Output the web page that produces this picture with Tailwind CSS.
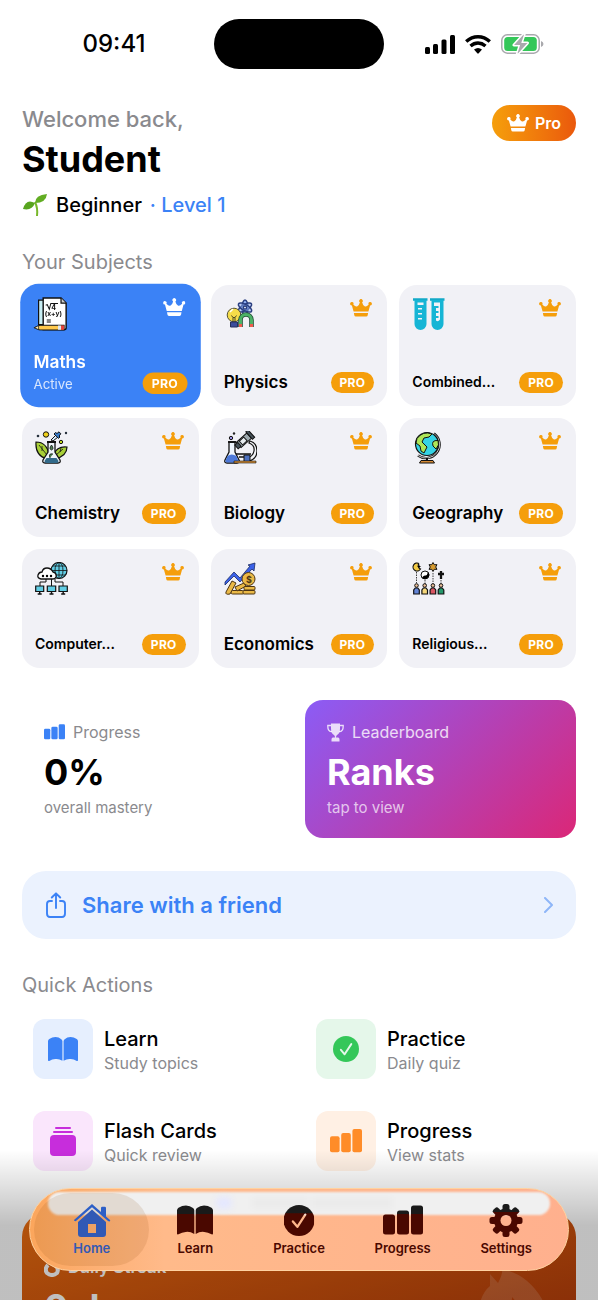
<!DOCTYPE html>
<html lang="en">
<head>
    <meta charset="UTF-8" />
    <meta name="viewport" content="width=device-width, initial-scale=1.0"/>
    <title>Study App - Home</title>
    <script src="https://cdn.jsdelivr.net/npm/@tailwindcss/browser@4"></script>
    <style>
        body { font-family: Inter, 'Liberation Sans', sans-serif; }
    </style>
</head>
<body class="bg-white text-black">
    <!-- Gradients and masks (must not be display:none) -->
    <svg class="absolute size-0" aria-hidden="true">
        <linearGradient id="tone" gradientUnits="userSpaceOnUse" x1="0" y1="8" x2="0" y2="9">
            <stop offset="0" stop-color="#1a1a1a"/><stop offset="1" stop-color="#4a0800"/>
        </linearGradient>
        <mask id="checkMask" maskUnits="userSpaceOnUse" x="0" y="0" width="32" height="32">
            <circle cx="16" cy="16" r="16" fill="#fff"/>
            <path d="m9.700 17 4.600 5.500L22.500 10" fill="none" stroke="#000" stroke-width="2.400" stroke-linecap="round" stroke-linejoin="round"/>
        </mask>
        <mask id="gearMask" maskUnits="userSpaceOnUse" x="0" y="0" width="34" height="34">
            <g fill="#fff" transform="translate(17 17)">
                <g id="teeth"><rect x="-3.500" y="-16.500" width="7" height="33" rx="2.500"/><rect x="-16.500" y="-3.500" width="33" height="7" rx="2.500"/></g>
                <use href="#teeth" transform="rotate(45)"/>
                <circle r="12"/><circle r="5.500" fill="#000"/>
            </g>
        </mask>
    </svg>

    <!-- Shared icons -->
    <svg class="hidden" aria-hidden="true">
        <symbol id="crown" viewBox="0 0 22 18">
            <path fill="currentColor" d="M3.600 12.600 1.900 6.400A1.700 1.700 0 1 1 3.300 5.500Q5.600 8.100 7.400 7.200 9.200 6.300 9.900 3.300A1.800 1.800 0 1 1 12.100 3.300Q12.800 6.300 14.600 7.200 16.400 8.100 18.700 5.500A1.700 1.700 0 1 1 20.100 6.400L18.400 12.600ZM3.900 14H18.100L17.700 16.200Q17.500 17.500 16.200 17.500H5.800Q4.500 17.500 4.300 16.200Z"/>
        </symbol>
        <symbol id="bars" viewBox="0 0 40 30">
            <rect x="0" y="9" width="12" height="20" rx="2.500"/>
            <rect x="14" y="5" width="12" height="24" rx="2.500"/>
            <rect x="28" y="0" width="12" height="29" rx="2.500"/>
        </symbol>
        <symbol id="book" viewBox="0 0 36 30">
            <path d="M0 5Q0 3.500 1.500 2.300 5 0 9 0T16 2.600Q17.300 3.600 17.300 5V28.500Q13 25.700 8.700 26.400 5 26.600 1.500 28.800 0 29.300 0 28ZM36 5Q36 3.500 34.500 2.300 31 0 27 0T20 2.600Q18.700 3.600 18.700 5V28.500Q23 25.700 27.300 26.400 31 26.600 34.500 28.800 36 29.300 36 28Z"/>
        </symbol>
        <symbol id="check" viewBox="0 0 32 32">
            <rect width="32" height="32" mask="url(#checkMask)"/>
        </symbol>
        <symbol id="gear" viewBox="0 0 34 34">
            <rect width="34" height="34" mask="url(#gearMask)"/>
        </symbol>

        <symbol id="maths" viewBox="0 0 33 33">
            <path d="M5 3h6v24H5z" fill="#c8eef4" stroke="#111" stroke-width="1.200"/>
            <path d="M9.500 1H27l5 5v24q0 2-2 2H9.500z" fill="#fff" stroke="#111" stroke-width="1.400"/>
            <path d="M27 1v5h5" fill="#ccc" stroke="#111" stroke-width="1.200"/>
            <path d="m12 8 1.500-.6L15.500 12 17 6.300h7" fill="none" stroke="#111"/>
            <text x="17.500" y="13" font-size="7" font-weight="700" fill="#111">4</text>
            <text x="11" y="19" font-size="6.500" font-weight="700" fill="#111">(x+y)</text>
            <path d="M13 22.500h4M13 24.500h4" stroke="#111"/>
            <path d="m1 30 5-2.300h24v4.600H6z" fill="#ffc94d" stroke="#111"/>
            <path d="m1 30 4-2v4z" fill="#fff0c0" stroke="#111" stroke-width=".7"/>
            <path d="M24 28h3v4h-3z" fill="#dfe8ef"/><path d="M27 28h3v4h-3z" fill="#e8403a"/>
        </symbol>
        <symbol id="physics" viewBox="0 0 33 33">
            <g fill="#8fb0f4" stroke="#2b3f80" stroke-width="1.500">
                <ellipse cx="21" cy="9.500" rx="3" ry="7.500"/>
                <ellipse cx="21" cy="9.500" rx="3" ry="7.500" transform="rotate(60 21 9.500)" fill-opacity=".5"/>
                <ellipse cx="21" cy="9.500" rx="3" ry="7.500" transform="rotate(120 21 9.500)" fill-opacity=".5"/>
                <circle cx="21" cy="9.500" r="1.600" fill="#fff"/>
            </g>
            <circle cx="10" cy="17" r="6.800" fill="#f5dc49" stroke="#555336" stroke-width="1"/>
            <path d="m6 14 3-3" stroke="#fff" stroke-width="1.500"/>
            <path d="M7.500 17.500 9 19.500V24m3.500-6.500L11 19.500V24M9 19.500h2" fill="none" stroke="#4c4824"/>
            <path d="M6.500 24h7v5h-7z" fill="#3c4d9c" stroke="#26305c"/>
            <path d="M16.500 29v-7a5.500 5.500 0 0 1 11 0v7" fill="none" stroke="#244d38" stroke-width="4.600"/>
            <path d="M16.500 26v-4a5.500 5.500 0 0 1 11 0v4" fill="none" stroke="#4cb266" stroke-width="3"/>
            <path d="M15 26h3v3h-3zm11 0h3v3h-3z" fill="#f05b4d"/>
        </symbol>
        <symbol id="tubes" viewBox="0 0 33 33">
            <path d="M1 1.500h14.500M18 1.500h14.500" stroke="#12a9c8" stroke-width="2.600"/>
            <path d="M2.500 2h12v24a6 6 0 0 1-12 0zm17 0h12v24a6 6 0 0 1-12 0z" fill="#16b5d5"/>
            <path d="M5.500 4.500h6v2.500h-6zM6 10h4v1.500H6zm0 5h4v1.500H6zm0 5h4v1.500H6zM22 4.500h6v17q-2 3-4 1v-2.500h2.500v-2H24v-3h2.500v-2H24v-3h2.500V8H22z" fill="#f2f2f7"/>
        </symbol>
        <symbol id="chemistry" viewBox="0 0 33 33">
            <circle cx="3" cy="5" r="1.300" fill="#26303c"/><circle cx="31" cy="2" r="1.200" fill="#26303c"/>
            <circle cx="11" cy="3.500" r="2.700" fill="#f1d21b" stroke="#111"/>
            <path d="m16 9 5-5 2 2-5 4z" fill="#d9edff" stroke="#111"/>
            <path d="m19 3 1.500-1.500 1.500 1L24 .8l1.800 2L24 5l1 1-1.500 1.300z" fill="#397dcc" stroke="#111"/>
            <circle cx="26" cy="11" r="1.700" fill="#c1d91e" stroke="#111"/>
            <path d="M12 28Q0 25 1 11q11 0 13 13zM20 28q12-3 12-12-10-1-13 7z" fill="#a8cf38" stroke="#111" stroke-width="1.200"/>
            <path d="m4 14 8 10m-5-9v5m21-2-7 6m5-7-1 4" fill="none" stroke="#111" stroke-width=".8"/>
            <path d="M13 11h7v10l5 8q1 3-2 3H10q-3 0-2-3l5-8z" fill="#eef5fa" stroke="#111" stroke-width="1.300"/>
            <path d="M11.500 27h10l2 3q0 2-2 2h-10q-2 0-2-2z" fill="#326a8a"/>
            <path d="M12 11h9" stroke="#111" stroke-width="2"/>
            <path d="M16.500 14q3 4 0 5-3-1 0-5M15 27q-2-5 3-4" fill="#4b8252" stroke="#111" stroke-width=".8"/>
        </symbol>
        <symbol id="biology" viewBox="0 0 33 33">
            <circle cx="7" cy="7" r="1.700" fill="#9a8fe5" stroke="#111"/><circle cx="10" cy="2.500" r="1.200" fill="#222"/>
            <path d="M5 11h6v10l4 8q1 3-2 3H3q-3 0-2-3l4-8z" fill="#edf4fc" stroke="#111" stroke-width="1.300"/>
            <path d="M3.500 25q4-3 9 0l2 5q0 1.500-2 1.500H3q-2 0-1.500-2z" fill="#4c78d8"/><path d="M4 11h8" stroke="#111" stroke-width="1.800"/>
            <path d="M25 12q6 2 5 8-1 6-8 7v4q11-2 11-11 0-8-7-10z" fill="#f1f2f5" stroke="#111" stroke-width="1.200"/>
            <g transform="rotate(-42 21 9)" stroke="#111"><path d="M13 5h14v7H13z" fill="#9ca8ad"/><path d="M16 6h6v5h-6z" fill="#e7edf0"/><path d="M10 6h4v5h-4zM27 3.500h3v10h-3z" fill="#46525a"/></g>
            <path d="M12 23h15M15 26h11" stroke="#111" stroke-width="1.500"/><path d="M20 24h6v7h-6z" fill="#4c70be" stroke="#111"/>
            <path d="M10 30h22v2H10z" fill="#d89137" stroke="#111" stroke-width=".6"/>
        </symbol>
        <symbol id="geography" viewBox="0 0 33 33">
            <path d="M22 2.500a13 13 0 1 1-16 22" fill="none" stroke="#111" stroke-width="2.400"/><path d="M22 2.500a13 13 0 1 1-16 22" fill="none" stroke="#fff" stroke-width=".8"/>
            <circle cx="15" cy="13" r="11.500" fill="#35d3e4" stroke="#111" stroke-width="1.200"/>
            <path d="M5 7.500Q11-.5 20 3l-3 3-5 1-2 4 5 5-3 6-3-2-1-5-4-3zM26 9.500q-7-.5-5 5.500l3 3q4-4 2-8.500z" fill="#aee657" stroke="#111"/>
            <path d="M15 27v3" stroke="#111" stroke-width="2"/><path d="M9 29.500h12l1.500 2.500h-15z" fill="#d68b37" stroke="#111"/>
        </symbol>
        <symbol id="computer" viewBox="0 0 33 33">
            <circle cx="24" cy="8.500" r="8" fill="#61cde4" stroke="#111" stroke-width="1.200"/>
            <path d="M16 8.500h16M24 .5v16M18 4h12M18 13h12" stroke="#111" stroke-width=".8"/><ellipse cx="24" cy="8.500" rx="4" ry="8" fill="none" stroke="#111" stroke-width=".8"/>
            <path d="M6 17q-4-1-3-4t4-3q1-4 5-4t6 4q4 1 3 5-1 2-3 2z" fill="#fff" stroke="#111" stroke-width="1.300"/>
            <circle cx="8" cy="14" r="1.200"/><circle cx="12" cy="14" r="1.200"/><circle cx="16" cy="14" r="1.200"/>
            <path d="M16.500 17v7M11 17v3H5v4M20 17v3h8v4" fill="none" stroke="#111"/>
            <path d="M.7 24h8v5.500h-8zm11.600 0h8.400v5.500h-8.400zm11.700 0h8.300v5.500H24z" fill="#61cde4" stroke="#111" stroke-width="1.200"/>
            <path d="M4.700 29v3m-2 0h4m9.800-3v3m-2 0h4m9.700-3v3m-2 0h4" stroke="#111" stroke-width="1.400"/>
        </symbol>
        <symbol id="economics" viewBox="0 0 33 33">
            <path d="m1 20 9-10 6 6L26 4l-2-1 7-2-1 8-2-2-12 13-6-6-9 9z" fill="#3b61e8" stroke="#1b2b63" stroke-width=".8"/>
            <g fill="#eab947" stroke="#4d3513"><rect x="7" y="28.500" width="13" height="3.500" rx="1.500"/><path d="m2 30 6-11 4 2-6 11q-5 1-4-2zM11 25l9-4 2 3-9 5z"/><rect x="20" y="24.500" width="11" height="3.500" rx="1"/><rect x="19" y="28.500" width="12" height="3.500" rx="1"/><circle cx="24.500" cy="17" r="6.500"/></g>
            <text x="22" y="21" font-size="9" font-weight="700" fill="#4d3513">$</text>
        </symbol>
        <symbol id="religious" viewBox="0 0 33 33">
            <path d="M7 1.500A4 4 0 1 0 8.500 7 3.500 3.500 0 0 1 7 1.500" fill="#f1c943" stroke="#111" stroke-width="1.200"/><path d="m7 2.500.7 1.500 1.500.5-1.500.5L7 6.500 6.500 5 5 4.500 6.500 4z"/>
            <path d="m21 .5 1.300 2.200H25l-1.300 2.300L25 7.300h-2.700L21 9.500l-1.300-2.200H17L18.300 5 17 2.700h2.700z" fill="#d79c31" stroke="#111"/>
            <circle cx="13" cy="13" r="4" fill="#fff" stroke="#111"/><path d="M16 10a4 4 0 0 1-6 5.500q2-2.500 3.500-2T16 10"/>
            <path d="M29 9v8M26 12h6" stroke="#111" stroke-width="2.300"/>
            <path d="M4.500 10v11M13 18v4M21 11v11M29 18v4" stroke="#111" stroke-width=".8" stroke-dasharray="1.500 1"/>
            <g fill="#ecc09a" stroke="#111"><circle cx="4.500" cy="23.500" r="1.800"/><circle cx="12.700" cy="23.500" r="1.800"/><circle cx="20.900" cy="23.500" r="1.800"/><circle cx="29" cy="23.500" r="1.800"/></g>
            <g stroke="#111" stroke-width="1.200"><path d="M1.700 32v-4l1.500-2h2.600l1.500 2v4z" fill="#6384d6"/><path d="M9.900 32v-4l1.500-2H14l1.500 2v4z" fill="#f5d77a"/><path d="M18.100 32v-4l1.500-2h2.600l1.500 2v4z" fill="#d95662"/><path d="M26.200 32v-4l1.500-2h2.600l1.500 2v4z" fill="#24976a"/></g>
        </symbol>
    </svg>

    <div class="relative h-screen overflow-hidden">
        <div class="h-full overflow-y-auto [scrollbar-width:none]">
            <!-- Status bar -->
            <header class="grid grid-cols-[1fr_170px_1fr] items-center px-3.5 pt-[19px]">
                <span class="text-center text-[24px] font-medium leading-7">09:41</span>
                <div class="h-[50px] rounded-full bg-black"></div>
                <div class="flex items-center justify-center gap-2.5">
                    <svg class="h-[19px] w-[30px]" viewBox="0 0 30 19" aria-label="Signal"><rect y="12" width="5" height="7" rx="1.500"/><rect x="8" y="9" width="5" height="10" rx="1.500"/><rect x="16.500" y="4.500" width="5" height="14.500" rx="1.500"/><rect x="25" width="5" height="19" rx="1.500"/></svg>
                    <svg class="h-[19px] w-[26px]" viewBox="0 0 26 19" fill="none" stroke="#000" stroke-width="3.400" aria-label="Wi-Fi"><path d="M1.200 6.600Q6.500 1.700 13 1.700T24.800 6.600"/><path d="M5.500 11Q9 8 13 8T20.500 11"/><path fill="#000" stroke="none" d="M9 14.500Q13 11.500 17 14.500L13.700 18.300Q13 19 12.300 18.300Z"/></svg>
                    <svg class="h-[20px] w-[43px]" viewBox="0 0 43 20" aria-label="Battery charging"><rect x=".8" y=".8" width="37.400" height="18.400" rx="5.500" fill="#fff" stroke="#a9a9ad" stroke-width="1.500"/><rect x="3.200" y="3" width="32.600" height="14" rx="3.500" fill="#34c759"/><path d="M40 7q2.500.8 2.500 3T40 13z" fill="#a9a9ad"/><path d="M22 0 12.500 10.500q-.8 1.200.6 1.200h5L15.500 20h2L27 9.500q.7-1.200-.7-1.200h-5L24 0z" fill="#a9a9ad" stroke="#fff" stroke-width="1.500"/></svg>
                </div>
            </header>

            <main class="px-[22px] pb-28">
                <!-- Greeting -->
                <section class="mt-9 flex items-start justify-between">
                    <div>
                        <p class="text-[22px] font-medium leading-7 text-[#8a8a8e]">Welcome back,</p>
                        <h1 class="mt-0.5 text-[36px] font-bold leading-12">Student</h1>
                        <p class="mt-2 flex items-center text-[20px] font-medium leading-7">
                            <svg class="mr-2 h-6 w-[26px]" viewBox="0 0 26 24" aria-hidden="true"><path d="M15 23Q16 15 13 9" fill="none" stroke="#78b82a" stroke-width="2"/><path d="M13 10Q13 2 25 1q-1 9-12 9" fill="#62ad23"/><path d="M13 10Q4 5 1 16q9 2 12-6" fill="#58a51f"/></svg>
                            Beginner <span class="ml-2 text-[#3b82f6]">· Level 1</span>
                        </p>
                    </div>
                    <button class="flex h-9 items-center gap-1.5 rounded-full bg-linear-to-r from-[#f59e0b] to-[#ea580c] px-[15px] text-base font-semibold text-white">
                        <svg class="h-[18px] w-[22px]"><use href="#crown"/></svg>Pro
                    </button>
                </section>

                <h2 class="mt-[29px] text-[20px] leading-7 text-[#8a8a8e]">Your Subjects</h2>
                <section id="subjects" class="mt-[9px] grid grid-cols-3 gap-3"></section>

                <!-- Stats -->
                <section class="mt-8 grid grid-cols-2 gap-3">
                    <div class="rounded-[18px] px-[22px] py-5">
                        <p class="flex items-center gap-2 text-base leading-6 text-[#8a8a8e]"><svg class="h-4 w-[21px] fill-[#3b82f6]"><use href="#bars"/></svg>Progress</p>
                        <p class="mt-1 text-[36px] font-bold leading-12">0%</p>
                        <p class="mt-0.5 text-[15px] leading-5 text-[#8a8a8e]">overall mastery</p>
                    </div>
                    <button class="rounded-[18px] bg-linear-[135deg] from-[#8b5cf6] to-[#db2777] px-[22px] py-5 text-left text-white">
                        <span class="flex items-center gap-2 text-base leading-6 text-white/80"><svg class="h-[19px] w-[17px]" viewBox="0 0 17 19" aria-hidden="true"><path fill="currentColor" d="M4 .5h9v5q0 5-3 6.500-1 .5-1 2.500h2q1.500 0 1.500 2v2h-8v-2q0-2 1.500-2h2q0-2-1-2.500-3-1.500-3-6.500z"/><path d="M4 2.500H.8Q.5 8.500 5 8.700M13 2.500h3.200q.3 6-4.200 6.200" fill="none" stroke="currentColor" stroke-width="1.300"/></svg>Leaderboard</span>
                        <span class="mt-1 block text-[36px] font-bold leading-12">Ranks</span>
                        <span class="mt-0.5 block text-[15px] leading-5 text-white/70">tap to view</span>
                    </button>
                </section>

                <button class="mt-[33px] flex h-[68px] w-full items-center rounded-3xl bg-[#ebf2fe] px-[23px] text-[22px] font-semibold text-[#3b82f6]">
                    <svg class="mr-[15px] h-[26px] w-[22px]" viewBox="0 0 20 26" fill="none" stroke="currentColor" stroke-width="1.900" stroke-linecap="round" stroke-linejoin="round" aria-hidden="true"><path d="M6 9H4Q1 9 1 12v9.500Q1 25 4 25h12q3 0 3-3.500V12q0-3-3-3h-2M10 16V1.500M5.800 5.500 10 1.300l4.200 4.200"/></svg>
                    Share with a friend
                    <svg class="ml-auto h-4 w-[9px]" viewBox="0 0 9 16" fill="none" stroke="#8eb6f8" stroke-width="2" stroke-linecap="round" stroke-linejoin="round" aria-hidden="true"><path d="m1 1 7 7-7 7"/></svg>
                </button>

                <h2 class="mt-8 text-[20px] leading-7 text-[#8a8a8e]">Quick Actions</h2>
                <section class="mt-2.5 grid grid-cols-2 gap-3">
                    <button class="flex items-center gap-[11px] px-[11px] py-2.5 text-left">
                        <span class="flex size-[60px] items-center justify-center rounded-xl bg-[#e6effe]"><svg class="h-[25px] w-[30px] fill-[#3b82f6]"><use href="#book"/></svg></span>
                        <span><span class="block text-[20px] font-medium leading-7">Learn</span><span class="block text-base leading-5 text-[#8a8a8e]">Study topics</span></span>
                    </button>
                    <button class="flex items-center gap-[11px] px-[11px] py-2.5 text-left">
                        <span class="flex size-[60px] items-center justify-center rounded-xl bg-[#e5f7ea]"><svg class="size-[26px] fill-[#34c759]"><use href="#check"/></svg></span>
                        <span><span class="block text-[20px] font-medium leading-7">Practice</span><span class="block text-base leading-5 text-[#8a8a8e]">Daily quiz</span></span>
                    </button>
                    <button class="flex items-center gap-[11px] px-[11px] py-2.5 text-left">
                        <span class="flex size-[60px] items-center justify-center rounded-xl bg-[#fae6fc]"><svg class="h-[29px] w-[26px] fill-[#c72ddc]" viewBox="0 0 26 29" aria-hidden="true"><rect y="8" width="26" height="21" rx="4"/><rect x="3" y="4" width="20" height="2" rx="1"/><rect x="5" width="16" height="2" rx="1"/></svg></span>
                        <span><span class="block text-[20px] font-medium leading-7">Flash Cards</span><span class="block text-base leading-5 text-[#8a8a8e]">Quick review</span></span>
                    </button>
                    <button class="flex items-center gap-[11px] px-[11px] py-2.5 text-left">
                        <span class="flex size-[60px] items-center justify-center rounded-xl bg-[#fff0e4]"><svg class="h-6 w-8 fill-[#ff8c28]"><use href="#bars"/></svg></span>
                        <span><span class="block text-[20px] font-medium leading-7">Progress</span><span class="block text-base leading-5 text-[#8a8a8e]">View stats</span></span>
                    </button>
                </section>

                <!-- Streak card -->
                <section class="relative mt-8 overflow-hidden rounded-3xl bg-linear-to-br from-[#f0700f] to-[#ac3409] px-[22px] pt-[42px] pb-6 text-white">
                    <p class="flex items-center gap-2 text-[17px] font-semibold leading-6"><svg class="h-5 w-4" viewBox="0 0 16 20" fill="none" stroke="currentColor" stroke-width="4" aria-hidden="true"><path d="M8 2q1 4 4 7t1 7q-5 4-10 0-3-4 1-8"/></svg>Daily Streak</p>
                    <p class="mt-1 text-[36px] font-bold leading-12">0 days</p>
                    <svg class="absolute top-14 right-7 h-24 w-[72px]" viewBox="0 0 72 96" aria-hidden="true"><path fill="#fff" fill-opacity=".15" d="M14 5 22 14Q27 5 26 0q25 5 40 30 16 50-30 65Q-5 90 2 45 4 25 14 17ZM36 28q0 12-10 22l25-5z"/></svg>
                </section>
            </main>
        </div>

        <!-- Shade behind the tab bar -->
        <div class="pointer-events-none absolute inset-x-0 bottom-0 h-[150px] bg-linear-to-b from-black/0 via-black/25 via-50% to-black/25"></div>

        <!-- Tab bar -->
        <nav class="absolute inset-x-[29px] bottom-[29px] grid h-[83px] grid-cols-5 overflow-hidden rounded-full border border-[#ffd2a0] bg-linear-to-r from-[#fba65c] via-[#ffba8a] via-25% to-[#ffb08e] px-2.5 py-1">
            <div class="absolute inset-x-[18px] top-[3px] h-[23px] rounded-full bg-[#f0f0f0] blur-[1px]"></div>
            <div class="absolute top-2 left-[186px] flex gap-1 blur-[3px]"><i class="mr-4 h-3 w-4 rounded-full bg-[#e4e7ff]"></i><i class="h-3 w-14 bg-black/2"></i><i class="h-3 w-20 bg-black/2"></i></div>
            <div class="absolute top-1 left-1 h-[73px] w-[115px] rounded-full bg-[#804000]/12"></div>
            <a href="#home" class="relative flex flex-col items-center pt-2.5 text-[#3459b4]">
                <svg class="h-[35px] w-[38px]" viewBox="0 0 38 35" aria-hidden="true"><path fill="#2d5fc7" d="m19 1 9 8V5q0-1.300 1.300-1.300h2.400Q33 3.700 33 5v8.500l4 3.600q.8 1.300-.7 1.500L35 18 19 4.300 3 18q-2 .5-2-1Z"/><path fill="#3159b5" fill-rule="evenodd" d="M19 6.500 33 19v12q0 3-3 3H8q-3 0-3-3V19ZM15 21v9h8v-9Z"/></svg>
                <span class="mt-0.5 text-[13px] font-semibold leading-4">Home</span>
            </a>
            <a href="#learn" class="relative flex flex-col items-center pt-2.5 text-[#4a0800]">
                <svg class="my-0.5 h-[31px] w-9" fill="url(#tone)"><use href="#book"/></svg>
                <span class="mt-0.5 text-[13px] font-semibold leading-4">Learn</span>
            </a>
            <a href="#practice" class="relative flex flex-col items-center pt-2.5 text-[#4a0800]">
                <svg class="my-0.5 h-[31px] w-8" fill="url(#tone)"><use href="#check"/></svg>
                <span class="mt-0.5 text-[13px] font-semibold leading-4">Practice</span>
            </a>
            <a href="#progress" class="relative flex flex-col items-center pt-2.5 text-[#4a0800]">
                <svg class="my-0.5 h-[31px] w-10" fill="url(#tone)"><use href="#bars"/></svg>
                <span class="mt-0.5 text-[13px] font-semibold leading-4">Progress</span>
            </a>
            <a href="#settings" class="relative flex flex-col items-center pt-2.5 text-[#4a0800]">
                <svg class="h-[35px] w-[34px]" fill="url(#tone)"><use href="#gear"/></svg>
                <span class="mt-0.5 text-[13px] font-semibold leading-4">Settings</span>
            </a>
        </nav>
    </div>

    <script>
        const subjects = [
            { name: "Maths", icon: "maths", active: true },
            { name: "Physics", icon: "physics" },
            { name: "Combined...", icon: "tubes", small: true },
            { name: "Chemistry", icon: "chemistry" },
            { name: "Biology", icon: "biology" },
            { name: "Geography", icon: "geography" },
            { name: "Computer...", icon: "computer", small: true },
            { name: "Economics", icon: "economics" },
            { name: "Religious...", icon: "religious", small: true }
        ];

        document.getElementById('subjects').innerHTML = subjects.map(s => `
            <button class="flex flex-col justify-between rounded-[18px] px-[13px] py-[13px] text-left ${s.active ? 'h-[121px] scale-102 bg-[#3b82f6] text-white' : 'min-h-[119px] bg-[#f1f1f6]'}">
                <span class="flex w-full items-start justify-between">
                    <svg class="size-[33px]"><use href="#${s.icon}"/></svg>
                    <svg class="mt-px mr-0.5 h-[18px] w-[22px] ${s.active ? 'text-white' : 'text-[#f59e0b]'}"><use href="#crown"/></svg>
                </span>
                <span class="flex w-full items-end justify-between">
                    <span>
                        <span class="block font-semibold leading-[22px] ${s.small ? 'text-sm' : 'text-[17px]'}">${s.name}</span>
                        ${s.active ? '<span class="block text-[13px] leading-5 text-white/80">Active</span>' : ''}
                    </span>
                    <span class="h-[21px] rounded-full bg-[#f59e0b] px-[9px] text-xs font-bold leading-[21px] tracking-wide text-white">PRO</span>
                </span>
            </button>
        `).join('');
    </script>
</body>
</html>
